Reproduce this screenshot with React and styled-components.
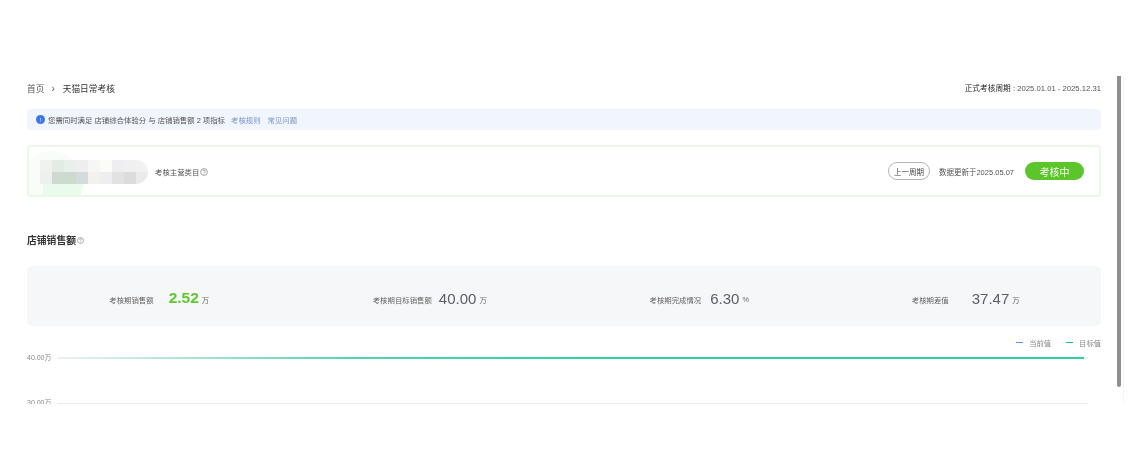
import React from "react";
import styled, { createGlobalStyle } from "styled-components";

const GlobalStyle = createGlobalStyle`
	html, body {
		margin: 0;
		padding: 0;
		background: #fff;
		overflow: hidden;
	}
	body {
		font-family: "Liberation Sans", "Noto Sans CJK SC", sans-serif;
	}
`;

const mosaicColors = [
	"#f0f2f0", "#e3ebe5", "#e9f0eb", "#eeeeef", "#f6f6f4", "#fbfbf8", "#eeeef0", "#f1f0f1", "#f2f1f2",
	"#eef0ee", "#ced9d0", "#cddad0", "#d5dadb", "#f2f1ee", "#eeeeee", "#e2e2e3", "#dcdcdc", "#ebeaea",
];

const stats = [
	{ label: "考核期销售额", value: "2.52", unit: "万", highlight: true, gap: 15, nudge: -2 },
	{ label: "考核期目标销售额", value: "40.00", unit: "万", gap: 7, nudge: 0 },
	{ label: "考核期完成情况", value: "6.30", unit: "%", gap: 9, nudge: 1 },
	{ label: "考核期差值", value: "37.47", unit: "万", gap: 23, nudge: -1 },
];

const HelpIcon = ({ size = 8 }) => (
	<svg width={size} height={size} viewBox="0 0 16 16" fill="none" stroke="#777" strokeWidth="1.3">
		<circle cx="8" cy="8" r="6.8" />
		<path d="M5.8 6.2a2.2 2.2 0 1 1 3.4 1.9c-.8.5-1.2.9-1.2 1.9" />
		<path d="M8 11.4v1.2" />
	</svg>
);

const App = () => {
	return (
		<Page>
			<GlobalStyle />
			<Viewport>
				<Content>
					<TopBar>
						<Breadcrumb>
							<Crumb>首页</Crumb>
							<Separator>›</Separator>
							<CurrentCrumb>天猫日常考核</CurrentCrumb>
						</Breadcrumb>
						<Period>
							正式考核周期 : <PeriodDates>2025.01.01 - 2025.12.31</PeriodDates>
						</Period>
					</TopBar>

					<Notice>
						<NoticeIcon>!</NoticeIcon>
						<NoticeText>您需同时满足 店铺综合体验分 与 店铺销售额 2 项指标</NoticeText>
						<NoticeLink>考核规则</NoticeLink>
						<NoticeLink>常见问题</NoticeLink>
					</Notice>

					<ShopCard>
						<GreenBlob />
						<ShopInfo>
							<Mosaic>
								{mosaicColors.map((color, i) => (
									<MosaicCell key={i} $color={color} />
								))}
							</Mosaic>
							<CategoryLabel>考核主营类目</CategoryLabel>
							<HelpIcon />
						</ShopInfo>
						<ShopActions>
							<PrevButton>上一周期</PrevButton>
							<UpdateText>数据更新于2025.05.07</UpdateText>
							<StatusPill>考核中</StatusPill>
						</ShopActions>
					</ShopCard>

					<SectionTitle>
						店铺销售额
						<HelpIcon size={7} />
					</SectionTitle>

					<StatsPanel>
						{stats.map((item) => (
							<StatItem key={item.label} $nudge={item.nudge}>
								<StatLabel $gap={item.gap}>{item.label}</StatLabel>
								<StatValue $highlight={item.highlight}>{item.value}</StatValue>
								<StatUnit>{item.unit}</StatUnit>
							</StatItem>
						))}
					</StatsPanel>

					<Legend>
						<LegendItem>
							<LegendMark $color="#5b8ff9" />
							当前值
						</LegendItem>
						<LegendItem>
							<LegendMark $color="#10c48f" />
							目标值
						</LegendItem>
					</Legend>

					<ChartRow>
						<AxisLabel>40.00万</AxisLabel>
						<TargetLine />
					</ChartRow>
					<ChartRow $low>
						<AxisLabel>30.00万</AxisLabel>
						<GridLine />
					</ChartRow>
				</Content>
				<ScrollRail>
					<ScrollThumb />
				</ScrollRail>
			</Viewport>
		</Page>
	);
};

export default App;

const Page = styled.div`
	width: 1128px;
	height: 453px;
	padding-top: 76px;
	box-sizing: border-box;
	background: #fff;
`;

const Viewport = styled.div`
	position: relative;
	width: 1128px;
	height: 328px;
	overflow: hidden;
`;

const Content = styled.div`
	width: 1074px;
	margin-left: 27px;
	padding-top: 6px;
	filter: blur(0.3px);
`;

const TopBar = styled.div`
	display: flex;
	justify-content: space-between;
	align-items: center;
	height: 13px;
`;

const Breadcrumb = styled.div`
	display: flex;
	align-items: center;
	font-size: 8.7px;
	color: #555;
`;

const Crumb = styled.span``;

const Separator = styled.span`
	margin: 0 8px 0 7px;
	font-size: 10px;
`;

const CurrentCrumb = styled.span`
	color: #333;
`;

const Period = styled.div`
	padding-bottom: 3px;
	font-size: 7.7px;
	color: #222;
`;

const PeriodDates = styled.span`
	color: #555;
`;

const Notice = styled.div`
	display: flex;
	align-items: center;
	height: 21px;
	margin-top: 14px;
	padding-left: 9px;
	border-radius: 4px;
	background: #f1f5fe;
	font-size: 7.4px;
`;

const NoticeIcon = styled.span`
	display: flex;
	align-items: center;
	justify-content: center;
	width: 9px;
	height: 9px;
	margin-right: 3px;
	border-radius: 50%;
	background: #3d75ee;
	color: #fff;
	font-size: 6px;
`;

const NoticeText = styled.span`
	color: #555;
	margin-right: 6px;
`;

const NoticeLink = styled.span`
	color: #7f97c9;
	margin-right: 7px;
`;

const ShopCard = styled.div`
	position: relative;
	display: flex;
	justify-content: space-between;
	align-items: center;
	height: 52px;
	box-sizing: border-box;
	margin-top: 15px;
	padding: 0 15px 0 11px;
	border: 2px solid #e9f8e9;
	border-radius: 4px;
	overflow: hidden;
`;

const GreenBlob = styled.div`
	position: absolute;
	left: -10px;
	top: 4px;
	width: 64px;
	height: 64px;
	border-radius: 50%;
	background: #f9fdf9;
	overflow: hidden;

	&::after {
		content: "";
		position: absolute;
		left: 24px;
		right: 0;
		top: 30px;
		bottom: 0;
		background: #e9fbea;
	}
`;

const ShopInfo = styled.div`
	position: relative;
	display: flex;
	align-items: center;
	gap: 1px;
	margin-top: 1px;
	font-size: 7.4px;
	color: #555;
`;

const Mosaic = styled.div`
	display: grid;
	grid-template-columns: repeat(9, 12px);
	grid-auto-rows: 12px;
	width: 108px;
	margin-right: 6px;
	border-radius: 0 12px 12px 0;
	overflow: hidden;
	background: #fff;
`;

const MosaicCell = styled.div`
	background: ${(props) => props.$color};
`;

const CategoryLabel = styled.span``;

const ShopActions = styled.div`
	display: flex;
	align-items: center;
	font-size: 7.5px;
	color: #555;
`;

const PrevButton = styled.div`
	display: flex;
	align-items: center;
	justify-content: center;
	width: 42px;
	height: 18px;
	box-sizing: border-box;
	margin-right: 9px;
	border: 1px solid #b5b5b5;
	border-radius: 9px;
	color: #444;
`;

const UpdateText = styled.span`
	margin-right: 11px;
`;

const StatusPill = styled.div`
	display: flex;
	align-items: center;
	justify-content: center;
	width: 59px;
	height: 18px;
	border-radius: 9px;
	background: #5cc52c;
	color: #f6fcf0;
	font-size: 10px;
`;

const SectionTitle = styled.div`
	display: flex;
	align-items: center;
	gap: 1px;
	height: 14px;
	margin-top: 36px;
	font-size: 9.8px;
	font-weight: 700;
	color: #333;
`;

const StatsPanel = styled.div`
	display: grid;
	grid-template-columns: repeat(4, 1fr);
	height: 60px;
	margin-top: 19px;
	border-radius: 5px;
	background: #f6f7f9;
`;

const StatItem = styled.div`
	display: flex;
	align-items: center;
	justify-content: center;
	padding-top: 6px;
	transform: translateX(${(props) => props.$nudge}px);
`;

const StatLabel = styled.span`
	margin-right: ${(props) => props.$gap}px;
	font-size: 7.4px;
	color: #666;
`;

const StatValue = styled.span`
	margin-bottom: 2px;
	font-size: ${(props) => (props.$highlight ? "15.5px" : "15px")};
	font-weight: ${(props) => (props.$highlight ? 700 : 400)};
	color: ${(props) => (props.$highlight ? "#5ec82f" : "#5a5d66")};
`;

const StatUnit = styled.span`
	margin: 1px 0 0 3px;
	font-size: 7.4px;
	color: #666;
`;

const Legend = styled.div`
	display: flex;
	justify-content: flex-end;
	gap: 15px;
	height: 13px;
	margin-top: 10px;
	font-size: 7.3px;
	color: #888;
`;

const LegendItem = styled.div`
	display: flex;
	align-items: center;
`;

const LegendMark = styled.span`
	width: 7px;
	height: 1px;
	margin-right: 6px;
	background: ${(props) => props.$color};
`;

const ChartRow = styled.div`
	display: flex;
	align-items: center;
	height: 12px;
	margin-top: ${(props) => (props.$low ? "33px" : "3px")};
`;

const AxisLabel = styled.span`
	width: 30px;
	flex-shrink: 0;
	margin-top: -2px;
	font-size: 7px;
	color: #888;
`;

const TargetLine = styled.div`
	width: 1031px;
	height: 2px;
	background: linear-gradient(90deg, #eef1f0 0, #4fd6a8 300px, #2ecf9c 600px, #2ecf9c 1027px, #eef1f0 1027px);
`;

const GridLine = styled.div`
	width: 1031px;
	height: 1px;
	background: #ececec;
`;

const ScrollRail = styled.div`
	position: absolute;
	left: 1117px;
	top: 0;
	bottom: 0;
	width: 6px;
	border-right: 1px solid #f3f5f9;
`;

const ScrollThumb = styled.div`
	width: 4px;
	height: 311px;
	border-radius: 0 0 2px 2px;
	background: #8f8f8f;
`;
